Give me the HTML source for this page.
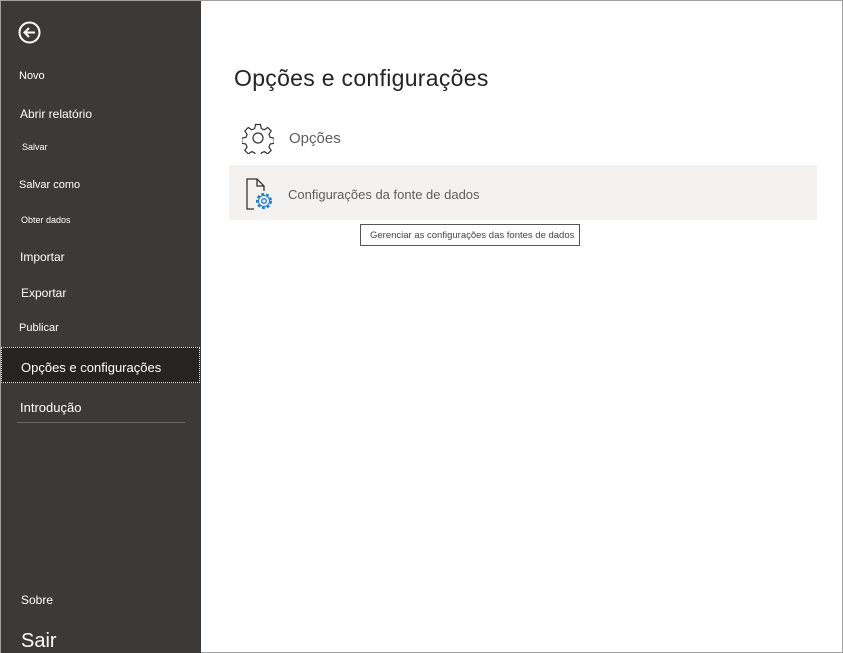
<!DOCTYPE html>
<html><head><meta charset="utf-8"><style>
body{margin:0;width:843px;height:653px;overflow:hidden;background:#fff;font-family:"Liberation Sans",sans-serif;position:relative}
.frame{position:absolute;left:0;top:0;width:841px;height:651px;border:1px solid #a0a0a0}
.side{position:absolute;left:1px;top:1px;width:200px;height:652px;background:#3b3a39}
.side div{position:absolute;color:#fff;white-space:nowrap}
.sel{left:0;top:346px;width:197px;height:34px;background:#252423;border:1px dotted #ddd}
h1{position:absolute;left:234px;top:65px;margin:0;font-weight:normal;font-size:23px;letter-spacing:0.3px;color:#252423}
.row{position:absolute;left:229px;top:165px;width:588px;height:55px;background:#f3f2f1}
.t{position:absolute;color:#605e5c;white-space:nowrap}
.tip{position:absolute;left:360px;top:224px;width:220px;height:22px;border:1px solid #555;background:#fff;font-size:9.5px;color:#444;line-height:22px;padding-left:9px;box-sizing:border-box;white-space:nowrap;overflow:hidden}
</style></head><body>
<div class="frame"></div>
<div class="side">
<svg style="position:absolute;left:17px;top:20px" width="23" height="23" viewBox="0 0 23 23"><circle cx="11.5" cy="11.5" r="10" fill="none" stroke="#fff" stroke-width="2"/><path d="M17 11.5H7M11 7l-4.5 4.5L11 16" fill="none" stroke="#fff" stroke-width="2"/></svg>
<div style="left:18px;top:69px;font-size:11px">Novo</div>
<div style="left:19px;top:106px;font-size:12px">Abrir relatório</div>
<div style="left:21px;top:141px;font-size:9px">Salvar</div>
<div style="left:18px;top:178px;font-size:11px">Salvar como</div>
<div style="left:20px;top:214px;font-size:9px">Obter dados</div>
<div style="left:19px;top:249px;font-size:12px">Importar</div>
<div style="left:20px;top:285px;font-size:12px">Exportar</div>
<div style="left:18px;top:321px;font-size:11px">Publicar</div>
<div class="sel"></div>
<div style="left:20px;top:359px;font-size:13px">Opções e configurações</div>
<div style="left:19px;top:399px;font-size:13px">Introdução</div>
<div style="left:16px;top:421px;width:168px;height:1px;background:#666"></div>
<div style="left:20px;top:592px;font-size:12px">Sobre</div>
<div style="left:20px;top:629px;font-size:20px">Sair</div>
</div>
<h1>Opções e configurações</h1>
<svg style="position:absolute;left:242px;top:122px" width="32" height="32" viewBox="-1 -1 32 32"><path d="M12.5 1.5h5l.8 4 3 1.3 3.4-2.3 3.5 3.5-2.3 3.4 1.3 3 4 .8v5l-4 .8-1.3 3 2.3 3.4-3.5 3.5-3.4-2.3-3 1.3-.8 4h-5l-.8-4-3-1.3-3.4 2.3-3.5-3.5 2.3-3.4-1.3-3-4-.8v-5l4-.8 1.3-3-2.3-3.4 3.5-3.5 3.4 2.3 3-1.3z" fill="none" stroke="#333" stroke-width="1.2"/><circle cx="15" cy="15" r="5" fill="none" stroke="#333" stroke-width="1.2"/></svg>
<div class="t" style="left:289px;top:130px;font-size:15px">Opções</div>
<div class="row"></div>
<svg style="position:absolute;left:246px;top:178px" width="30" height="34" viewBox="0 0 30 34"><path d="M8 31H1V1h10l7 7v5M11 1v7h7" fill="none" stroke="#333" stroke-width="1.3"/><circle cx="18" cy="23" r="7" fill="none" stroke="#1a7fd0" stroke-width="2" stroke-dasharray="3 2"/><circle cx="18" cy="23" r="5.5" fill="none" stroke="#1a7fd0" stroke-width="1"/><circle cx="18" cy="23" r="2.3" fill="none" stroke="#1a7fd0" stroke-width="1.3"/></svg>
<div class="t" style="left:288px;top:187px;font-size:13px">Configurações da fonte de dados</div>
<div class="tip">Gerenciar as configurações das fontes de dados</div>
</body></html>
